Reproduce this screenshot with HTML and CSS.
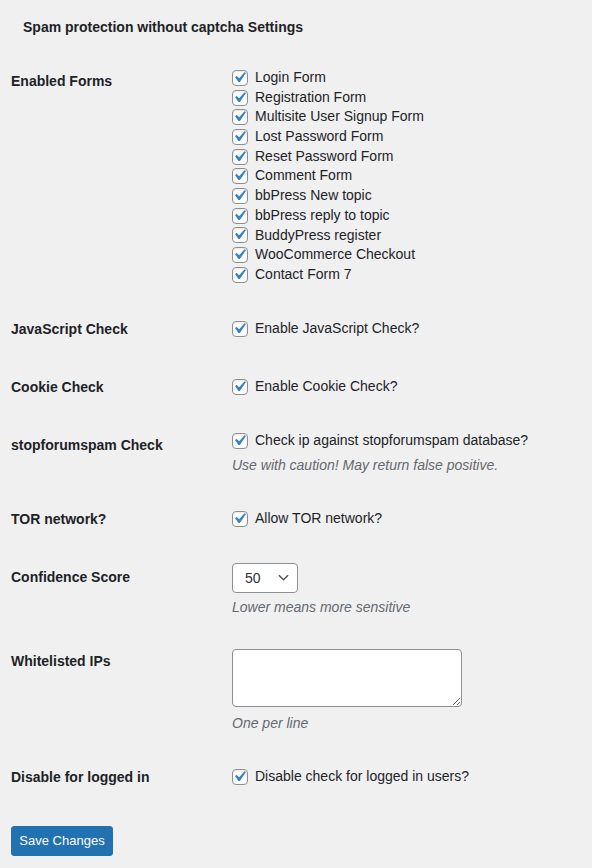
FILE: index.html
```html
<!DOCTYPE html>
<html lang="en">
<head>
<meta charset="utf-8">
<title>Spam protection without captcha Settings</title>
<link rel="stylesheet" href="styles.css">
</head>
<body>
<div class="wrap">
  <h1 class="title">Spam protection without captcha Settings</h1>
  <form class="form-table">
    <div class="row">
      <div class="th">Enabled Forms</div>
      <div class="td td-list">
        <label class="opt"><span class="cb"><svg viewBox="0 0 20 20"><path d="M14.83 4.89l1.34.94-5.81 8.38H9.02L5.78 9.67l1.34-1.25 2.57 2.4z"/></svg></span>Login Form</label>
        <label class="opt"><span class="cb"><svg viewBox="0 0 20 20"><path d="M14.83 4.89l1.34.94-5.81 8.38H9.02L5.78 9.67l1.34-1.25 2.57 2.4z"/></svg></span>Registration Form</label>
        <label class="opt"><span class="cb"><svg viewBox="0 0 20 20"><path d="M14.83 4.89l1.34.94-5.81 8.38H9.02L5.78 9.67l1.34-1.25 2.57 2.4z"/></svg></span>Multisite User Signup Form</label>
        <label class="opt"><span class="cb"><svg viewBox="0 0 20 20"><path d="M14.83 4.89l1.34.94-5.81 8.38H9.02L5.78 9.67l1.34-1.25 2.57 2.4z"/></svg></span>Lost Password Form</label>
        <label class="opt"><span class="cb"><svg viewBox="0 0 20 20"><path d="M14.83 4.89l1.34.94-5.81 8.38H9.02L5.78 9.67l1.34-1.25 2.57 2.4z"/></svg></span>Reset Password Form</label>
        <label class="opt"><span class="cb"><svg viewBox="0 0 20 20"><path d="M14.83 4.89l1.34.94-5.81 8.38H9.02L5.78 9.67l1.34-1.25 2.57 2.4z"/></svg></span>Comment Form</label>
        <label class="opt"><span class="cb"><svg viewBox="0 0 20 20"><path d="M14.83 4.89l1.34.94-5.81 8.38H9.02L5.78 9.67l1.34-1.25 2.57 2.4z"/></svg></span>bbPress New topic</label>
        <label class="opt"><span class="cb"><svg viewBox="0 0 20 20"><path d="M14.83 4.89l1.34.94-5.81 8.38H9.02L5.78 9.67l1.34-1.25 2.57 2.4z"/></svg></span>bbPress reply to topic</label>
        <label class="opt"><span class="cb"><svg viewBox="0 0 20 20"><path d="M14.83 4.89l1.34.94-5.81 8.38H9.02L5.78 9.67l1.34-1.25 2.57 2.4z"/></svg></span>BuddyPress register</label>
        <label class="opt"><span class="cb"><svg viewBox="0 0 20 20"><path d="M14.83 4.89l1.34.94-5.81 8.38H9.02L5.78 9.67l1.34-1.25 2.57 2.4z"/></svg></span>WooCommerce Checkout</label>
        <label class="opt"><span class="cb"><svg viewBox="0 0 20 20"><path d="M14.83 4.89l1.34.94-5.81 8.38H9.02L5.78 9.67l1.34-1.25 2.57 2.4z"/></svg></span>Contact Form 7</label>
      </div>
    </div>
    <div class="row">
      <div class="th">JavaScript Check</div>
      <div class="td">
        <label class="opt"><span class="cb"><svg viewBox="0 0 20 20"><path d="M14.83 4.89l1.34.94-5.81 8.38H9.02L5.78 9.67l1.34-1.25 2.57 2.4z"/></svg></span>Enable JavaScript Check?</label>
      </div>
    </div>
    <div class="row">
      <div class="th">Cookie Check</div>
      <div class="td">
        <label class="opt"><span class="cb"><svg viewBox="0 0 20 20"><path d="M14.83 4.89l1.34.94-5.81 8.38H9.02L5.78 9.67l1.34-1.25 2.57 2.4z"/></svg></span>Enable Cookie Check?</label>
      </div>
    </div>
    <div class="row">
      <div class="th">stopforumspam Check</div>
      <div class="td">
        <label class="opt"><span class="cb"><svg viewBox="0 0 20 20"><path d="M14.83 4.89l1.34.94-5.81 8.38H9.02L5.78 9.67l1.34-1.25 2.57 2.4z"/></svg></span>Check ip against stopforumspam database?</label>
        <p class="description">Use with caution! May return false positive.</p>
      </div>
    </div>
    <div class="row">
      <div class="th">TOR network?</div>
      <div class="td">
        <label class="opt"><span class="cb"><svg viewBox="0 0 20 20"><path d="M14.83 4.89l1.34.94-5.81 8.38H9.02L5.78 9.67l1.34-1.25 2.57 2.4z"/></svg></span>Allow TOR network?</label>
      </div>
    </div>
    <div class="row">
      <div class="th">Confidence Score</div>
      <div class="td">
        <div class="select"><span class="select-value">50</span><svg class="chev" viewBox="0 0 12 7"><path d="M1 1l5 5 5-5"/></svg></div>
        <p class="description">Lower means more sensitive</p>
      </div>
    </div>
    <div class="row">
      <div class="th">Whitelisted IPs</div>
      <div class="td">
        <textarea class="ips"></textarea>
        <p class="description desc-after-area">One per line</p>
      </div>
    </div>
    <div class="row">
      <div class="th">Disable for logged in</div>
      <div class="td">
        <label class="opt"><span class="cb"><svg viewBox="0 0 20 20"><path d="M14.83 4.89l1.34.94-5.81 8.38H9.02L5.78 9.67l1.34-1.25 2.57 2.4z"/></svg></span>Disable check for logged in users?</label>
      </div>
    </div>
    <p class="submit"><button type="button" class="button-primary">Save Changes</button></p>
  </form>
</div>
</body>
</html>
```

FILE: styles.css
```css
html, body {
  margin: 0;
  padding: 0;
  background: #f0f0f1;
}
body {
  font-family: "Liberation Sans", Arial, sans-serif;
  font-size: 14px;
  color: #1d2327;
}
.wrap {
  padding: 18px 0 0 11px;
}
.title {
  margin: 0 0 16px 12px;
  font-size: 14px;
  line-height: 18px;
  font-weight: 700;
  color: #1d2327;
}
.form-table {
  display: block;
}
.row {
  display: grid;
  grid-template-columns: 210px 1fr;
}
.th {
  align-self: start;
  padding: 20px 0;
  line-height: 18.2px;
  font-weight: 700;
}
.td {
  align-self: center;
  padding: 15px 0 15px 11px;
}
.td-list {
  padding-top: 16px;
}
.opt {
  display: flex;
  align-items: center;
  height: 19.7px;
  line-height: 19.7px;
}
.cb {
  flex: none;
  width: 14px;
  height: 14px;
  border: 1px solid #8c8f94;
  border-radius: 4px;
  background: #fff;
  box-shadow: inset 0 1px 2px rgba(0,0,0,.1);
  margin-right: 7px;
  position: relative;
}
.cb svg {
  position: absolute;
  left: -4px;
  top: -4px;
  width: 21px;
  height: 21px;
  fill: #3582c4;
}
.description {
  margin: 4px 0 0;
  font-size: 14px;
  line-height: 20px;
  font-style: italic;
  color: #646970;
}
.select {
  display: flex;
  align-items: center;
  justify-content: space-between;
  box-sizing: border-box;
  width: 66px;
  height: 30px;
  border: 1px solid #8c8f94;
  border-radius: 4px;
  background: #fff;
  padding: 0 8px 0 12px;
  color: #2c3338;
}
.chev {
  width: 11px;
  height: 7px;
  fill: none;
  stroke: #50575e;
  stroke-width: 1.6;
}
.ips {
  display: block;
  box-sizing: border-box;
  width: 230px;
  height: 58px;
  margin: 2px 0 0;
  border: 1px solid #8c8f94;
  border-radius: 4px;
  background: #fff;
  box-shadow: none;
  padding: 2px 6px;
  font-family: inherit;
}
.desc-after-area {
  margin-top: 6px;
}
.submit {
  margin: 0;
  padding: 20px 0 0;
}
.button-primary {
  box-sizing: border-box;
  height: 30px;
  width: 102px;
  padding: 0 6px;
  background: #2271b1;
  border: 1px solid #2271b1;
  border-radius: 3px;
  color: #fff;
  font-family: inherit;
  font-size: 13px;
  line-height: 28px;
  white-space: nowrap;
  cursor: pointer;
}
```
